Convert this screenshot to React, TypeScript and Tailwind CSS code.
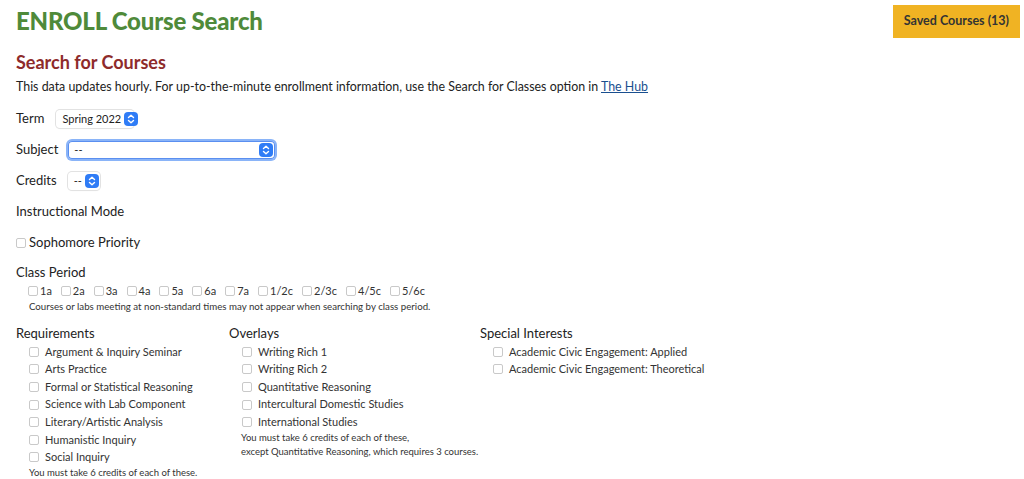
import React from "react";

const font = { fontFamily: "Lato, 'Noto Sans', sans-serif" };

function Stepper() {
  return (
    <span className="flex h-[14px] w-[14px] shrink-0 items-center justify-center rounded-[4px] bg-[#2f7cf6]">
      <svg width="8" height="10" viewBox="0 0 8 10" fill="none" stroke="white" strokeWidth="1.4" strokeLinecap="round" strokeLinejoin="round">
        <path d="M1.5 3.5 L4 1.2 L6.5 3.5" />
        <path d="M1.5 6.5 L4 8.8 L6.5 6.5" />
      </svg>
    </span>
  );
}

function Select({ value, width, focused }: { value: string; width: string; focused?: boolean }) {
  return (
    <div
      className={`flex h-[18px] items-center justify-between gap-[3px] whitespace-nowrap rounded-[4px] bg-white pl-[6px] pr-[2px] text-[11px] text-[#222] ${width} ${
        focused ? "shadow-[0_0_0_2px_#8ab4f8,0_0_0_1px_#5a8ff0_inset]" : "shadow-[0_0_0_1px_#e2e2e2,0_1px_1px_rgba(0,0,0,0.08)]"
      }`}
    >
      <span>{value}</span>
      <Stepper />
    </div>
  );
}

function Box() {
  return <span className="inline-block h-[10px] w-[10px] shrink-0 rounded-[2px] border border-[#c9c9c9] bg-white" />;
}

function CheckList({ items }: { items: string[] }) {
  return (
    <ul className="ml-[13px] mt-[2px] flex flex-col">
      {items.map((it) => (
        <li key={it} className="flex h-[17.6px] items-center gap-[6px] text-[11px] text-[#333]">
          <Box />
          <span>{it}</span>
        </li>
      ))}
    </ul>
  );
}

const periods = ["1a", "2a", "3a", "4a", "5a", "6a", "7a", "1/2c", "2/3c", "4/5c", "5/6c"];

export default function App() {
  return (
    <div className="h-[479px] w-[1024px] overflow-hidden bg-white px-4 text-[#222]" style={font}>
      <div className="flex items-start justify-between">
        <h1 className="mt-[7px] text-[24px] font-black leading-[28px] tracking-[-0.2px] text-[#4f8a3a]">ENROLL Course Search</h1>
        <button className="mt-[5px] mr-[-12px] h-[33px] bg-[#f0b323] px-[11px] text-[12.5px] font-bold text-[#333]">
          Saved Courses (13)
        </button>
      </div>
      <h2 className="mt-[13px] text-[18px] font-bold leading-[22px] text-[#8e2b2b]">Search for Courses</h2>
      <p className="mt-[5px] text-[12.4px] leading-[18px] text-[#222]">
        This data updates hourly. For up-to-the-minute enrollment information, use the Search for Classes option in{" "}
        <a className="text-[#1a4f8f] underline">The Hub</a>
      </p>

      <div className="mt-[14px] flex h-[18px] items-center gap-[12px] text-[13px]">
        <span>Term</span>
        <Select value="Spring 2022" width="w-[78px]" />
      </div>
      <div className="mt-[13px] flex h-[18px] items-center gap-[10px] text-[13px]">
        <span>Subject</span>
        <Select value="--" width="w-[207px]" focused />
      </div>
      <div className="mt-[13px] flex h-[18px] items-center gap-[11px] text-[13px]">
        <span>Credits</span>
        <Select value="--" width="w-[32px]" />
      </div>
      <div className="mt-[13px] flex h-[18px] items-center text-[13px]">Instructional Mode</div>
      <div className="mt-[13px] flex h-[18px] items-center gap-[3px] text-[13px]">
        <Box />
        <span>Sophomore Priority</span>
      </div>
      <div className="mt-[12px] flex h-[18px] items-center text-[13px]">Class Period</div>
      <div className="ml-[12px] flex h-[18px] items-center gap-[9px] text-[11px] text-[#333]">
        {periods.map((p) => (
          <span key={p} className="flex items-center gap-[2px]">
            <Box />
            {p}
          </span>
        ))}
      </div>
      <p className="ml-[13px] text-[9.7px] leading-[12px] text-[#333]">
        Courses or labs meeting at non-standard times may not appear when searching by class period.
      </p>

      <div className="mt-[13px] flex">
        <div className="w-[213px]">
          <div className="text-[13px] leading-[16px]">Requirements</div>
          <CheckList
            items={[
              "Argument & Inquiry Seminar",
              "Arts Practice",
              "Formal or Statistical Reasoning",
              "Science with Lab Component",
              "Literary/Artistic Analysis",
              "Humanistic Inquiry",
              "Social Inquiry",
            ]}
          />
          <p className="ml-[13px] text-[9.5px] leading-[14px] text-[#333]">You must take 6 credits of each of these.</p>
        </div>
        <div className="w-[251px]">
          <div className="text-[13px] leading-[16px]">Overlays</div>
          <CheckList
            items={[
              "Writing Rich 1",
              "Writing Rich 2",
              "Quantitative Reasoning",
              "Intercultural Domestic Studies",
              "International Studies",
            ]}
          />
          <p className="ml-[12px] text-[9.5px] leading-[14px] text-[#333]">
            You must take 6 credits of each of these,
            <br />
            except Quantitative Reasoning, which requires 3 courses.
          </p>
        </div>
        <div>
          <div className="text-[13px] leading-[16px]">Special Interests</div>
          <CheckList items={["Academic Civic Engagement: Applied", "Academic Civic Engagement: Theoretical"]} />
        </div>
      </div>
    </div>
  );
}
